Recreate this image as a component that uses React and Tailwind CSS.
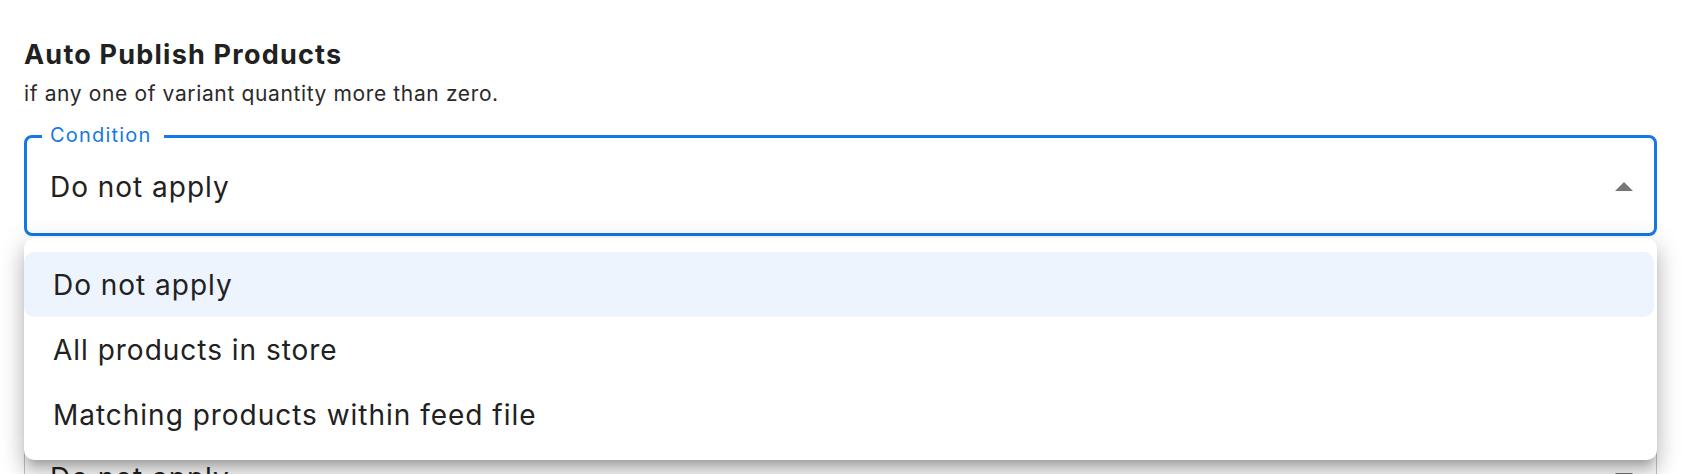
import React from "react";

function Arrow({ up }) {
  return (
    <svg width="18" height="9" viewBox="0 0 18 9" className="shrink-0">
      {up ? (
        <path d="M0 9 L9 0 L18 9 Z" fill="#767676" />
      ) : (
        <path d="M0 0 L9 9 L18 0 Z" fill="#767676" />
      )}
    </svg>
  );
}

export default function App() {
  const items = ["Do not apply", "All products in store", "Matching products within feed file"];
  return (
    <div className="relative h-[474px] w-full overflow-hidden bg-white font-['Inter',sans-serif] text-[#212121]">
      <div className="pl-6 pr-[25px] pt-[39px]">
        <h2 className="text-[27px] leading-[32px] font-bold tracking-[0.045em]">Auto Publish Products</h2>
        <p className="mt-[9px] text-[21px] leading-[28px] tracking-[0.03em] text-[#2a2a2a]">
          if any one of variant quantity more than zero.
        </p>

        <div className="relative mt-[27px] h-[101px] rounded-[8px] border-[3px] border-[#1479e6] bg-white">
          <span className="absolute left-[15px] top-[-17px] bg-white pl-2 pr-3 text-[20px] leading-[28px] tracking-[0.06em] text-[#1479e6]">
            Condition
          </span>
          <div className="flex h-full items-center justify-between pl-[23px] pr-[21px] pt-[2px]">
            <span className="text-[28px] leading-[34px] tracking-[0.035em]">Do not apply</span>
            <Arrow up />
          </div>
        </div>

        <div className="relative mt-[190px] h-[101px] rounded-[8px] border-[1.5px] border-[#c4c4c4] bg-white">
          <div className="flex h-full items-center justify-between pl-[25px] pr-[23px] pt-[2px]">
            <span className="text-[28px] leading-[34px] tracking-[0.035em]">Do not apply</span>
            <Arrow />
          </div>
        </div>
      </div>

      <div className="absolute left-6 right-[25px] top-[238px] rounded-[10px] bg-white pt-[14px] pb-[13px] shadow-[0_9px_9px_-5px_rgba(0,0,0,0.2),0_14px_18px_2px_rgba(0,0,0,0.14),0_5px_25px_4px_rgba(0,0,0,0.12)]">
        {items.map((t, i) => (
          <div
            key={t}
            className={
              i === 0
                ? "mr-[3px] flex h-[65px] items-center rounded-[10px] bg-[#edf4fe] pl-[29px] text-[28px] tracking-[0.035em]"
                : "mr-[3px] flex h-[65px] items-center pl-[29px] text-[28px] tracking-[0.035em]"
            }
          >
            {t}
          </div>
        ))}
      </div>
    </div>
  );
}
